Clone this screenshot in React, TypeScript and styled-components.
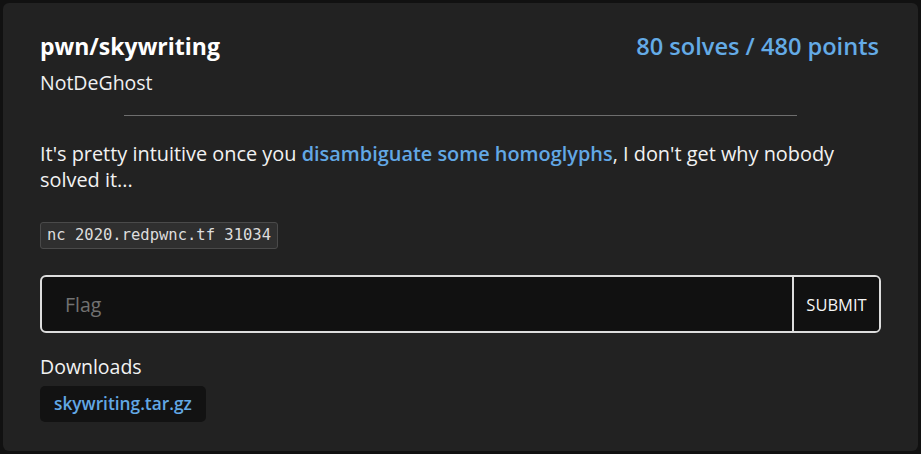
import React from "react";
import styled, { createGlobalStyle } from "styled-components";

const Global = createGlobalStyle`
  html, body { margin: 0; padding: 0; background: #111111; }
  body { font-family: "Open Sans", "Noto Sans", sans-serif; color: #f2f2f2; }
  * { box-sizing: border-box; }
`;

const Page = styled.div`
  padding: 3px;
  width: 921px;
  height: 454px;
`;

const Card = styled.section`
  background: #222222;
  border-radius: 6px;
  padding: 28px 37px 29px;
  height: 448px;
`;

const Header = styled.header`
  display: flex;
  justify-content: space-between;
  align-items: flex-start;
`;

const TitleCol = styled.div`
  display: flex;
  flex-direction: column;
  gap: 9px;
`;

const Title = styled.h1`
  margin: 0;
  font-size: 23px;
  line-height: 30px;
  font-weight: 700;
  color: #ffffff;
`;

const Author = styled.div`
  font-size: 19.5px;
  line-height: 26px;
  color: #f0f0f0;
`;

const Score = styled.div`
  font-size: 23.6px;
  line-height: 30px;
  font-weight: 600;
  color: #64abe6;
  margin-right: 2px;
`;

const Divider = styled.hr`
  width: 80%;
  margin: 19px auto 25px;
  border: none;
  height: 1px;
  background: #6e6e6e;
`;

const Desc = styled.p`
  margin: 0;
  font-size: 19.9px;
  line-height: 26px;
  color: #f2f2f2;
`;

const Link = styled.a`
  color: #62a8e5;
  font-weight: 600;
  text-decoration: none;
`;

const Code = styled.code`
  display: inline-block;
  margin-top: 29px;
  font-family: "DejaVu Sans Mono", "Liberation Mono", monospace;
  font-size: 15.5px;
  line-height: 19px;
  padding: 3px 6px;
  background: #2f2f2f;
  border: 1px solid #4a4a4a;
  border-radius: 3px;
  color: #dddddd;
`;

const Form = styled.form`
  display: flex;
  margin-top: 26px;
  height: 58px;
  border: 2px solid #dddddd;
  border-radius: 6px;
  background: #111111;
  overflow: hidden;
`;

const FlagInput = styled.input`
  flex: 1;
  background: transparent;
  border: none;
  outline: none;
  padding: 0 23px;
  font-family: "Open Sans", "Noto Sans", sans-serif;
  font-size: 19.5px;
  color: #f0f0f0;
  &::placeholder { color: #727272; }
`;

const Submit = styled.button`
  width: 87px;
  background: #111111;
  border: none;
  border-left: 2px solid #dddddd;
  color: #f5f5f5;
  font-family: "Open Sans", "Noto Sans", sans-serif;
  font-size: 16.5px;
  padding: 0;
`;

const SectionLabel = styled.div`
  margin-top: 21px;
  font-size: 19.5px;
  line-height: 26px;
  color: #f2f2f2;
`;

const DownloadBtn = styled.a`
  display: inline-block;
  margin-top: 6px;
  height: 36px;
  line-height: 36px;
  padding: 0 14px;
  border-radius: 5px;
  background: #121212;
  color: #62a8e5;
  font-weight: 600;
  font-size: 17.3px;
  text-decoration: none;
`;

export default function App() {
  return (
    <>
      <Global />
      <Page>
        <Card>
          <Header>
            <TitleCol>
              <Title>pwn/skywriting</Title>
              <Author>NotDeGhost</Author>
            </TitleCol>
            <Score>80 solves / 480 points</Score>
          </Header>
          <Divider />
          <Desc>
            It's pretty intuitive once you <Link href="#">disambiguate some homoglyphs</Link>, I don't get why nobody solved it...
          </Desc>
          <Code>nc 2020.redpwnc.tf 31034</Code>
          <Form onSubmit={(e) => e.preventDefault()}>
            <FlagInput placeholder="Flag" />
            <Submit type="submit">SUBMIT</Submit>
          </Form>
          <SectionLabel>Downloads</SectionLabel>
          <DownloadBtn href="#">skywriting.tar.gz</DownloadBtn>
        </Card>
      </Page>
    </>
  );
}
